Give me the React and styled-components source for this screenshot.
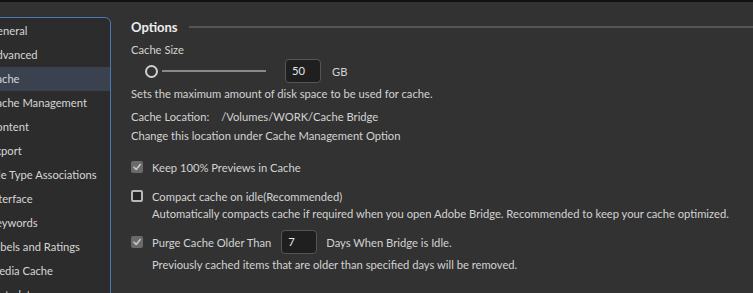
import styled, { createGlobalStyle } from "styled-components";

const GlobalStyle = createGlobalStyle`
  html, body {
    margin: 0;
    padding: 0;
    background-color: #323232;
    overflow: hidden;
  }
  * {
    box-sizing: border-box;
  }
`;

const Window = styled.div`
  width: 753px;
  height: 293px;
  background-color: #323232;
  border-top: 2px solid #111111;
  display: flex;
  align-items: flex-start;
  font-family: Lato, "Open Sans", sans-serif;
  color: #d4d4d4;
  overflow: hidden;
`;

const SideBar = styled.ul`
  list-style: none;
  margin: 15px 0 0 -16px;
  padding: 1px 0 0;
  width: 127px;
  height: 300px;
  flex-shrink: 0;
  background-color: #2c2c2c;
  border: 1px solid #4a78b8;
  border-radius: 6px;
  overflow: hidden;
`;

const SideItem = styled.li`
  height: 24px;
  line-height: 24px;
  padding-left: 4px;
  font-size: 11.2px;
  white-space: nowrap;
  color: #d6d6d6;
  background-color: ${(p) => (p.$active ? "#3a4250" : "transparent")};
`;

const Content = styled.div`
  flex: 1;
  display: flex;
  flex-direction: column;
  padding: 16px 0 0 20px;
  font-size: 11.2px;
`;

const Header = styled.div`
  display: flex;
  align-items: center;
  gap: 11px;
  height: 18px;
  h2 {
    margin: 0;
    font-size: 13px;
    font-weight: 700;
    color: #eeeeee;
  }
`;

const Rule = styled.div`
  flex: 1;
  height: 2px;
  background-color: #555555;
`;

const Line = styled.div`
  height: 18px;
  line-height: 18px;
  margin-top: ${(p) => p.$gap || 0}px;
  padding-left: ${(p) => p.$indent || 0}px;
  white-space: nowrap;
  color: #d2d2d2;
`;

const SliderRow = styled.div`
  display: flex;
  align-items: center;
  height: 24px;
  padding-left: 14px;
`;

const Knob = styled.div`
  width: 13px;
  height: 13px;
  border-radius: 50%;
  border: 2px solid #cfcfcf;
`;

const Track = styled.div`
  width: 104px;
  height: 2px;
  margin-left: 4px;
  background-color: #8a8a8a;
`;

const NumberBox = styled.div`
  width: 36px;
  height: 24px;
  line-height: 22px;
  padding-left: 6px;
  margin: ${(p) => p.$margin};
  background-color: #1f1f1f;
  border: 1px solid #555555;
  border-radius: 4px;
  color: #e6e6e6;
`;

const Unit = styled.span`
  margin-left: 11px;
`;

const LocationPath = styled.span`
  margin-left: 12px;
`;

const CheckRow = styled.div`
  display: flex;
  align-items: center;
  gap: 9px;
  height: ${(p) => p.$height || 18}px;
  margin-top: ${(p) => p.$gap || 0}px;
  white-space: nowrap;
  color: #d2d2d2;
`;

const Box = styled.div`
  width: 12px;
  height: 12px;
  border-radius: 2px;
  display: flex;
  align-items: center;
  justify-content: center;
  background-color: ${(p) => (p.$checked ? "#6a6a6a" : "#262626")};
  border: ${(p) => (p.$checked ? "none" : "2px solid #b8b8b8")};
`;

const Check = ({ checked }) => (
  <Box $checked={checked}>
    {checked && (
      <svg width="10" height="10" viewBox="0 0 10 10">
        <path
          d="M2 5.2 L4.2 7.4 L8.2 2.6"
          fill="none"
          stroke="#c8c8c8"
          strokeWidth="1.6"
          strokeLinecap="round"
          strokeLinejoin="round"
        />
      </svg>
    )}
  </Box>
);

const menu = [
  "General",
  "Advanced",
  "Cache",
  "Cache Management",
  "Content",
  "Export",
  "File Type Associations",
  "Interface",
  "Keywords",
  "Labels and Ratings",
  "Media Cache",
  "Metadata",
];

export default function App() {
  return (
    <>
      <GlobalStyle />
      <Window>
        <SideBar>
          {menu.map((m) => (
            <SideItem key={m} $active={m === "Cache"}>
              {m}
            </SideItem>
          ))}
        </SideBar>
        <Content>
          <Header>
            <h2>Options</h2>
            <Rule />
          </Header>
          <Line $gap={5}>Cache Size</Line>
          <SliderRow>
            <Knob />
            <Track />
            <NumberBox $margin="0 0 0 19px">50</NumberBox>
            <Unit>GB</Unit>
          </SliderRow>
          <Line $gap={2}>
            Sets the maximum amount of disk space to be used for cache.
          </Line>
          <Line $gap={5}>
            Cache Location:
            <LocationPath>/Volumes/WORK/Cache Bridge</LocationPath>
          </Line>
          <Line $gap={1}>Change this location under Cache Management Option</Line>
          <CheckRow $gap={13}>
            <Check checked />
            Keep 100% Previews in Cache
          </CheckRow>
          <CheckRow $gap={11}>
            <Check />
            Compact cache on idle(Recommended)
          </CheckRow>
          <Line $indent={21}>
            Automatically compacts cache if required when you open Adobe Bridge.
            Recommended to keep your cache optimized.
          </Line>
          <CheckRow $gap={7} $height={24}>
            <Check checked />
            Purge Cache Older Than
            <NumberBox $margin="0 0 0 1px">7</NumberBox>
            Days When Bridge is Idle.
          </CheckRow>
          <Line $gap={2} $indent={21}>
            Previously cached items that are older than specified days will be
            removed.
          </Line>
        </Content>
      </Window>
    </>
  );
}
